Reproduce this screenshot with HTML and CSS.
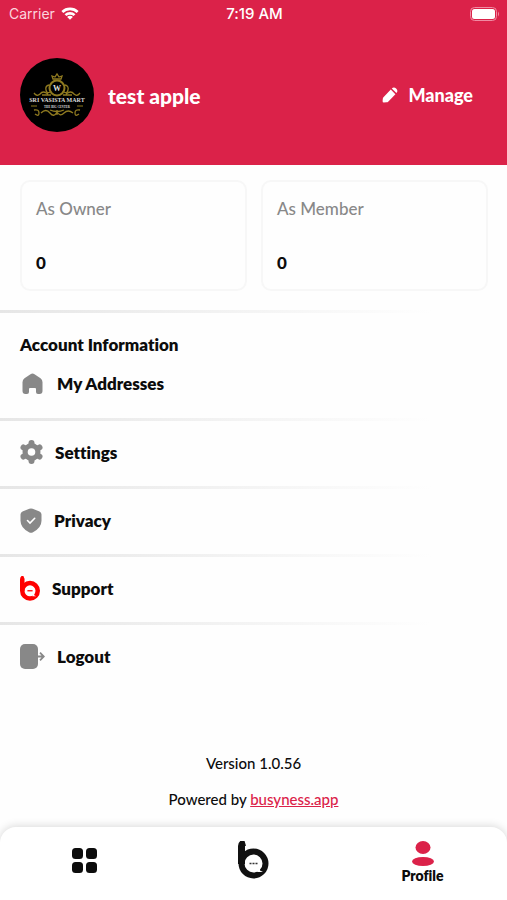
FILE: index.html
```html
<!DOCTYPE html>
<html lang="en">
<head>
    <meta charset="UTF-8">
    <meta name="viewport" content="width=device-width, initial-scale=1.0">
    <title>Profile</title>
    <link rel="stylesheet" href="styles.css">
</head>
<body>
    <header>
        <div class="status-bar">
            <div class="carrier">
                <span>Carrier</span>
                <svg width="18" height="14" viewBox="0 0 20 15" fill="none" stroke="#fff" stroke-width="3">
                    <path d="M1.5 5.2a12.2 12.2 0 0 1 17 0M5 8.8a7 7 0 0 1 10 0"/>
                    <path d="M10 14L6.800 10.800a4.500 4.500 0 0 1 6.400 0z" fill="#fff" stroke="none"/>
                </svg>
            </div>
            <span class="time">7:19 AM</span>
            <svg class="battery" width="30" height="14" viewBox="0 0 30 14">
                <rect x="0.500" y="0.500" width="26" height="13" rx="4" fill="none" stroke="#f08ba3"/>
                <rect x="2" y="2" width="23" height="10" rx="2.500" fill="#fff"/>
                <path d="M28 4.500q2 2.500 0 5z" fill="#f08ba3"/>
            </svg>
        </div>
        <div class="user">
            <svg class="avatar" width="74" height="74" viewBox="0 0 74 74">
                <circle cx="37" cy="37" r="37" fill="#000"/>
                <g fill="none" stroke="#8f7a20" stroke-width="1.300">
                    <circle cx="37" cy="30" r="7.500" stroke-width="2"/>
                    <path d="M33 21l-1-3 3 1 2-3 2 3 3-1-1 3zM29 27q-4 1-3 5t4 2M45 27q4 1 3 5t-4 2"/>
                    <path d="M28 36q-5-4-8 0-3 3-6-1M46 36q5-4 8 0 3 3 6-1M22 37h9M43 37h9"/>
                    <path d="M14 52q5-1 5 3t-4 1M60 52q-5-1-5 3t4 1M21 55q5-5 9 0t7-1q3 5 7 1t9 0M30 52q7 3 14 0M37 52v5"/>
                    <path d="M11 48h6M57 48h6" stroke-width="1"/>
                </g>
                <text x="37" y="33" font-size="8">W</text>
                <text x="37" y="44" font-size="6">SRI VASISTA MART</text>
                <text x="37" y="50" font-size="3">THE BIG CENTER</text>
            </svg>
            <h1>test apple</h1>
            <button class="manage">
                <svg width="16" height="16" viewBox="0 0 16 16" fill="#fff">
                    <path d="M8.800 2.600l4.600 4.600-7 7.200q-.8.800-2 .9l-2.500.2q-1.500 0-1.300-1.500l.2-2.300q.1-1 .9-1.800z"/>
                    <path d="M9.800 1.600q2-2.200 4.300-.1 2.400 2.200.3 4.600z"/>
                </svg>
                Manage
            </button>
        </div>
    </header>

    <main>
        <section class="stats">
            <div class="card">
                <h2>As Owner</h2>
                <p>0</p>
            </div>
            <div class="card">
                <h2>As Member</h2>
                <p>0</p>
            </div>
        </section>

        <section class="account">
            <h2>Account Information</h2>
            <nav class="menu">
                <a href="#" class="first">
                    <svg width="25" height="24" viewBox="0 0 25 24" fill="#888">
                        <path d="M10.500 2.200q2-1.500 4 0l6 4q2 1.500 2 4V19q0 3-3 3h-1.500q-2 0-2-2v-3q0-1-1-1h-5q-1 0-1 1v3q0 2-2 2H5.500q-3 0-3-3v-8.800q0-2.500 2-4z"/>
                    </svg>
                    My Addresses
                </a>
                <a href="#">
                    <svg width="23" height="24" viewBox="0 0 23 24">
                        <g fill="#888" stroke="#888" stroke-width="6" stroke-linecap="round">
                            <circle cx="11.500" cy="12" r="6"/>
                            <path d="M11.500 3v18M3.500 7.500l16 9M3.500 16.500l16-9"/>
                        </g>
                        <circle cx="11.500" cy="12" r="3.800" fill="#fff"/>
                    </svg>
                    Settings
                </a>
                <a href="#">
                    <svg width="22" height="25" viewBox="-0.5 0 22 25">
                        <path d="M8.800.8q1.700-.7 3.400 0l6.800 2.700q2 .8 2 3v6.300q0 7-8.500 11.500-2 1-4 0Q0 19.800 0 12.800V6.500q0-2.200 2-3z" fill="#888"/>
                        <path d="M7 12.500l2.500 2.500 4.700-4.700" fill="none" stroke="#fff" stroke-width="1.600" stroke-linecap="round"/>
                    </svg>
                    Privacy
                </a>
                <a href="#">
                    <svg width="20" height="25" viewBox="0 0 31 38">
                        <path d="M3.500 23V5Q3.500 2.500 6 1.500" fill="none" stroke="#f00" stroke-width="7"/>
                        <circle cx="15.500" cy="22.500" r="12" fill="none" stroke="#f00" stroke-width="7"/>
                        <path d="M22 25v4.500l3 1.500h-6z" fill="#fff"/>
                        <path d="M11.500 22.500h8" stroke="#f00" stroke-width="2"/>
                    </svg>
                    Support
                </a>
                <a href="#">
                    <svg width="25" height="25" viewBox="0 0 25 25">
                        <rect width="18" height="25" rx="5" fill="#888"/>
                        <path d="M17 12.500h7M20 8.700l3.800 3.800-3.800 3.800" fill="none" stroke="#888" stroke-width="1.800"/>
                    </svg>
                    Logout
                </a>
            </nav>
        </section>

        <footer>
            <p>Version 1.0.56</p>
            <p>Powered by <a href="#">busyness.app</a></p>
        </footer>
    </main>

    <nav class="tabs">
        <a href="#" aria-label="Categories">
            <svg width="25" height="38" viewBox="0 0 25 38" fill="#0c0c0c">
                <rect y="7" width="11" height="11" rx="3.500"/>
                <rect x="14" y="7" width="11" height="11" rx="3.500"/>
                <rect y="21" width="11" height="11" rx="3.500"/>
                <rect x="14" y="21" width="11" height="11" rx="3.500"/>
            </svg>
        </a>
        <a href="#" aria-label="Home">
            <svg width="31" height="38" viewBox="0 0 31 38">
                <path d="M3.500 23V5Q3.500 2.500 7 1.500" fill="none" stroke="#111" stroke-width="7"/>
                <circle cx="15.500" cy="22.500" r="12" fill="none" stroke="#111" stroke-width="6"/>
                <path d="M22 25v4.500l3 1.500h-6z" fill="#fff"/>
                <path d="M11.500 22.500h8" stroke="#333" stroke-width="1.500" stroke-dasharray="2 1"/>
            </svg>
        </a>
        <a href="#" class="active">
            <svg width="22" height="26" viewBox="0 0 22 26" fill="#db2249">
                <ellipse cx="11" cy="6.500" rx="7.500" ry="6.500"/>
                <ellipse cx="11" cy="20.500" rx="11" ry="4.500"/>
            </svg>
            Profile
        </a>
    </nav>
</body>
</html>
```
FILE: styles.css
```css
* {
    box-sizing: border-box;
}
body {
    margin: 0;
    min-height: 100vh;
    display: flex;
    flex-direction: column;
    font-family: Lato, sans-serif;
    font-size: 17px;
    font-variant-ligatures: none;
    color: #0c0c0c;
    background-color: #fefefe;
}
h1, h2, p {
    margin: 0;
}
a {
    color: inherit;
    text-decoration: none;
}
svg {
    display: block;
    flex-shrink: 0;
}
header {
    background-color: #db2249;
    color: #fff;
}
.status-bar {
    display: grid;
    grid-template-columns: 1fr auto 1fr;
    align-items: center;
    height: 27px;
    padding: 0 7px 0 9px;
    font-family: Inter, sans-serif;
    font-size: 14px;
}
.carrier {
    display: flex;
    align-items: center;
    gap: 6px;
    color: #fbd5de;
}
.time {
    font-size: 15px;
    font-weight: 500;
}
.battery {
    justify-self: end;
}
.user {
    display: flex;
    align-items: center;
    padding: 31px 34px 33px 20px;
}
.avatar text {
    font-family: "Liberation Serif", serif;
    font-weight: bold;
    text-anchor: middle;
    fill: #ddd;
}
.user h1 {
    margin-left: 14px;
    font-size: 21px;
    font-weight: 900;
}
.manage {
    display: flex;
    align-items: center;
    gap: 10px;
    margin-left: auto;
    padding: 0;
    border: none;
    background: none;
    color: #fff;
    font-family: inherit;
    font-size: 18px;
    font-weight: 900;
    cursor: pointer;
}
.stats {
    display: grid;
    grid-template-columns: 1fr 1fr;
    gap: 14px;
    padding: 15px 19px 19px 20px;
}
.card {
    height: 111px;
    padding: 15px 14px;
    border: 2px solid #f7f7f7;
    border-radius: 10px;
}
.card h2 {
    margin-bottom: 30px;
    font-size: 17px;
    line-height: 24px;
    font-weight: 500;
    color: #888;
}
.card p {
    font-weight: 900;
    line-height: 24px;
}
.account h2,
.menu a {
    font-size: 17px;
    font-weight: 800;
}
/* divider that fades out to the right */
.account,
.menu a + a {
    background: linear-gradient(to right, #e6e6e6, #fefefe 85%) top / 100% 3px no-repeat;
}
.account h2 {
    padding: 23px 20px 0;
    line-height: 24px;
}
.menu a {
    display: flex;
    align-items: center;
    gap: 12px;
    height: 68px;
    padding: 0 20px;
}
.menu .first {
    height: 61px;
    padding-bottom: 8px;
}
footer {
    padding: 61px 20px 16px;
    font-size: 15px;
    font-weight: 500;
    line-height: 24px;
    text-align: center;
}
footer p + p {
    margin-top: 12px;
}
footer a {
    color: #db2249;
    text-decoration: underline;
}
.tabs {
    display: grid;
    grid-template-columns: repeat(3, 1fr);
    margin-top: auto;
    height: 73px;
    padding-top: 14px;
    border-radius: 16px 16px 0 0;
    background-color: #fff;
    box-shadow: 0 -1px 8px rgba(0, 0, 0, 0.15);
}
.tabs a {
    display: flex;
    flex-direction: column;
    align-items: center;
    font-size: 14px;
    font-weight: 800;
}
```
